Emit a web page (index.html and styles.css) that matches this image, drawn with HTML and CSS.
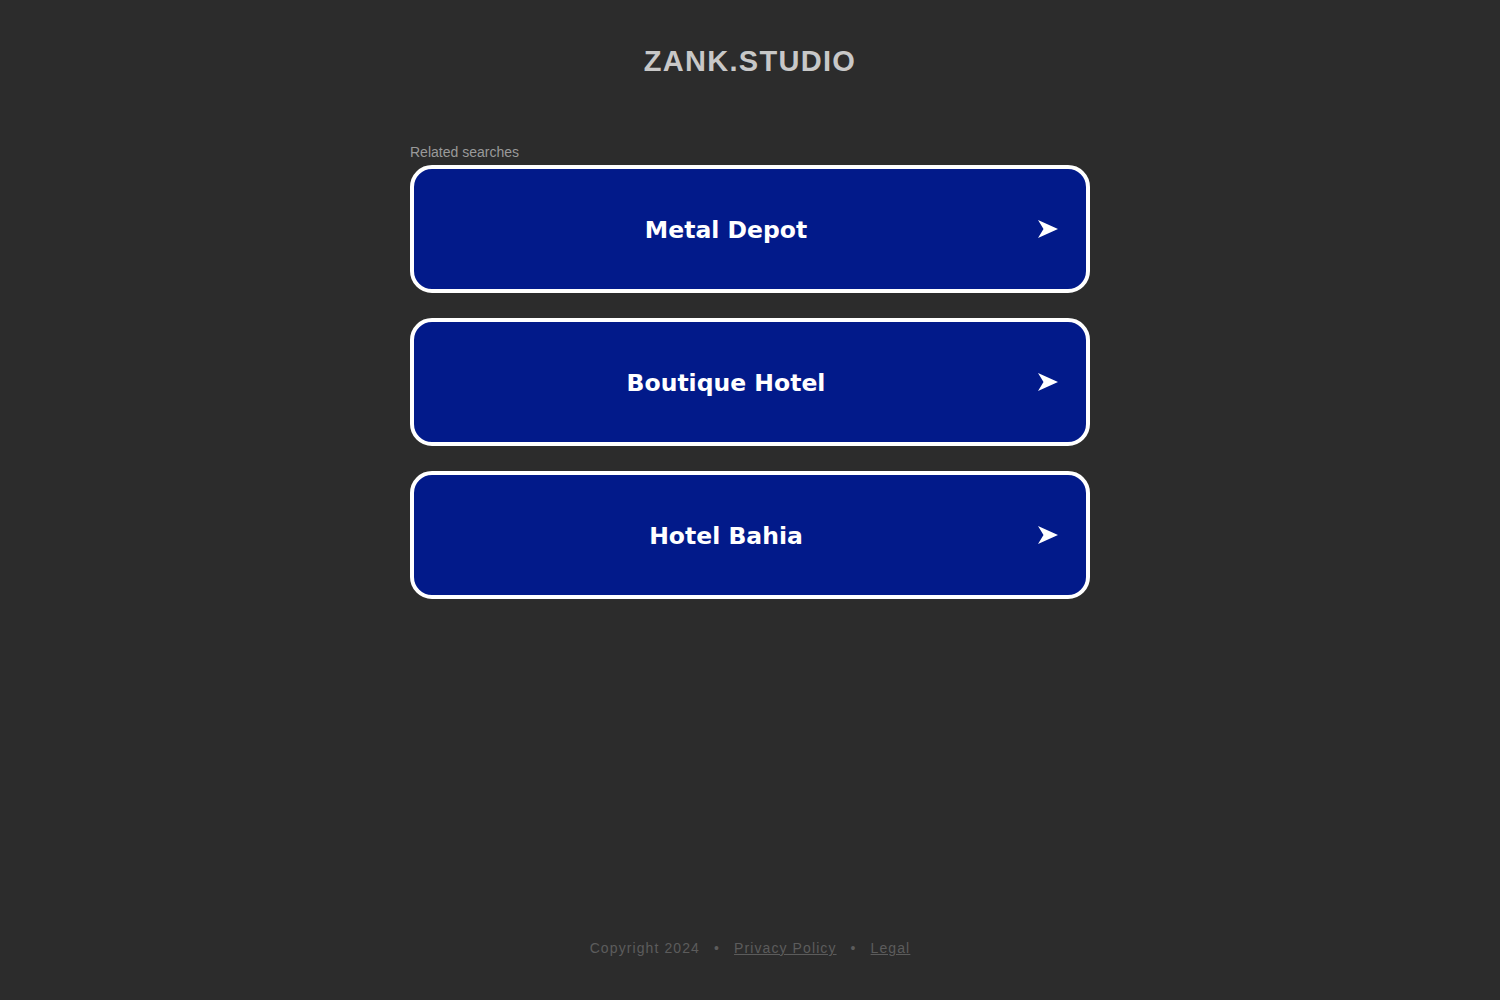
FILE: index.html
```html
<!DOCTYPE html>
<html lang="en">
<head>
<meta charset="utf-8">
<title>zank.studio</title>
<link rel="stylesheet" href="styles.css">
</head>
<body>
<div class="page">
  <header class="header">
    <h1 class="logo">ZANK.STUDIO</h1>
  </header>
  <main class="main">
    <div class="related">
      <p class="related-title">Related searches</p>
      <a class="search-btn" href="#"><span class="label">Metal Depot</span><svg class="arrow" width="20" height="20" viewBox="0 0 20 20"><path d="M0 1 L20 10 L0 19 L5.5 10 Z" fill="#fff"/></svg></a>
      <a class="search-btn" href="#"><span class="label">Boutique Hotel</span><svg class="arrow" width="20" height="20" viewBox="0 0 20 20"><path d="M0 1 L20 10 L0 19 L5.5 10 Z" fill="#fff"/></svg></a>
      <a class="search-btn" href="#"><span class="label">Hotel Bahia</span><svg class="arrow" width="20" height="20" viewBox="0 0 20 20"><path d="M0 1 L20 10 L0 19 L5.5 10 Z" fill="#fff"/></svg></a>
    </div>
  </main>
  <footer class="footer">
    <span>Copyright 2024</span>
    <span class="dot">•</span>
    <a href="#">Privacy Policy</a>
    <span class="dot">•</span>
    <a href="#">Legal</a>
  </footer>
</div>
</body>
</html>
```

FILE: styles.css
```css
html, body {
  margin: 0;
  padding: 0;
  background: #2c2c2c;
}
body {
  font-family: "Liberation Sans", Arial, sans-serif;
}
.page {
  height: 1000px;
  display: flex;
  flex-direction: column;
  align-items: center;
}
.header {
  padding-top: 44px;
}
.logo {
  margin: 0;
  font-size: 29px;
  font-weight: bold;
  letter-spacing: 1.3px;
  color: #c8c8c8;
  line-height: 34px;
}
.main {
  flex: 1;
  padding-top: 65px;
}
.related {
  width: 680px;
}
.related-title {
  margin: 0 0 4px 0;
  font-size: 14px;
  line-height: 18px;
  color: #9a9a9a;
}
.search-btn {
  display: flex;
  align-items: center;
  box-sizing: border-box;
  height: 128px;
  margin-bottom: 25px;
  border: 4px solid #fff;
  border-radius: 22px;
  background: #021a8a;
  text-decoration: none;
  padding-right: 28px;
}
.label {
  flex: 1;
  padding-top: 2px;
  text-align: center;
  color: #fff;
  font-family: "DejaVu Sans", Verdana, sans-serif;
  font-weight: bold;
  font-size: 23.5px;
}
.arrow {
  flex: none;
  width: 20px;
  height: 20px;
}
.footer {
  padding-bottom: 44px;
  font-size: 14px;
  letter-spacing: 1.1px;
  color: #5c5c5c;
  display: flex;
  gap: 14px;
}
.footer a {
  color: #5c5c5c;
  text-decoration: underline;
}
```
